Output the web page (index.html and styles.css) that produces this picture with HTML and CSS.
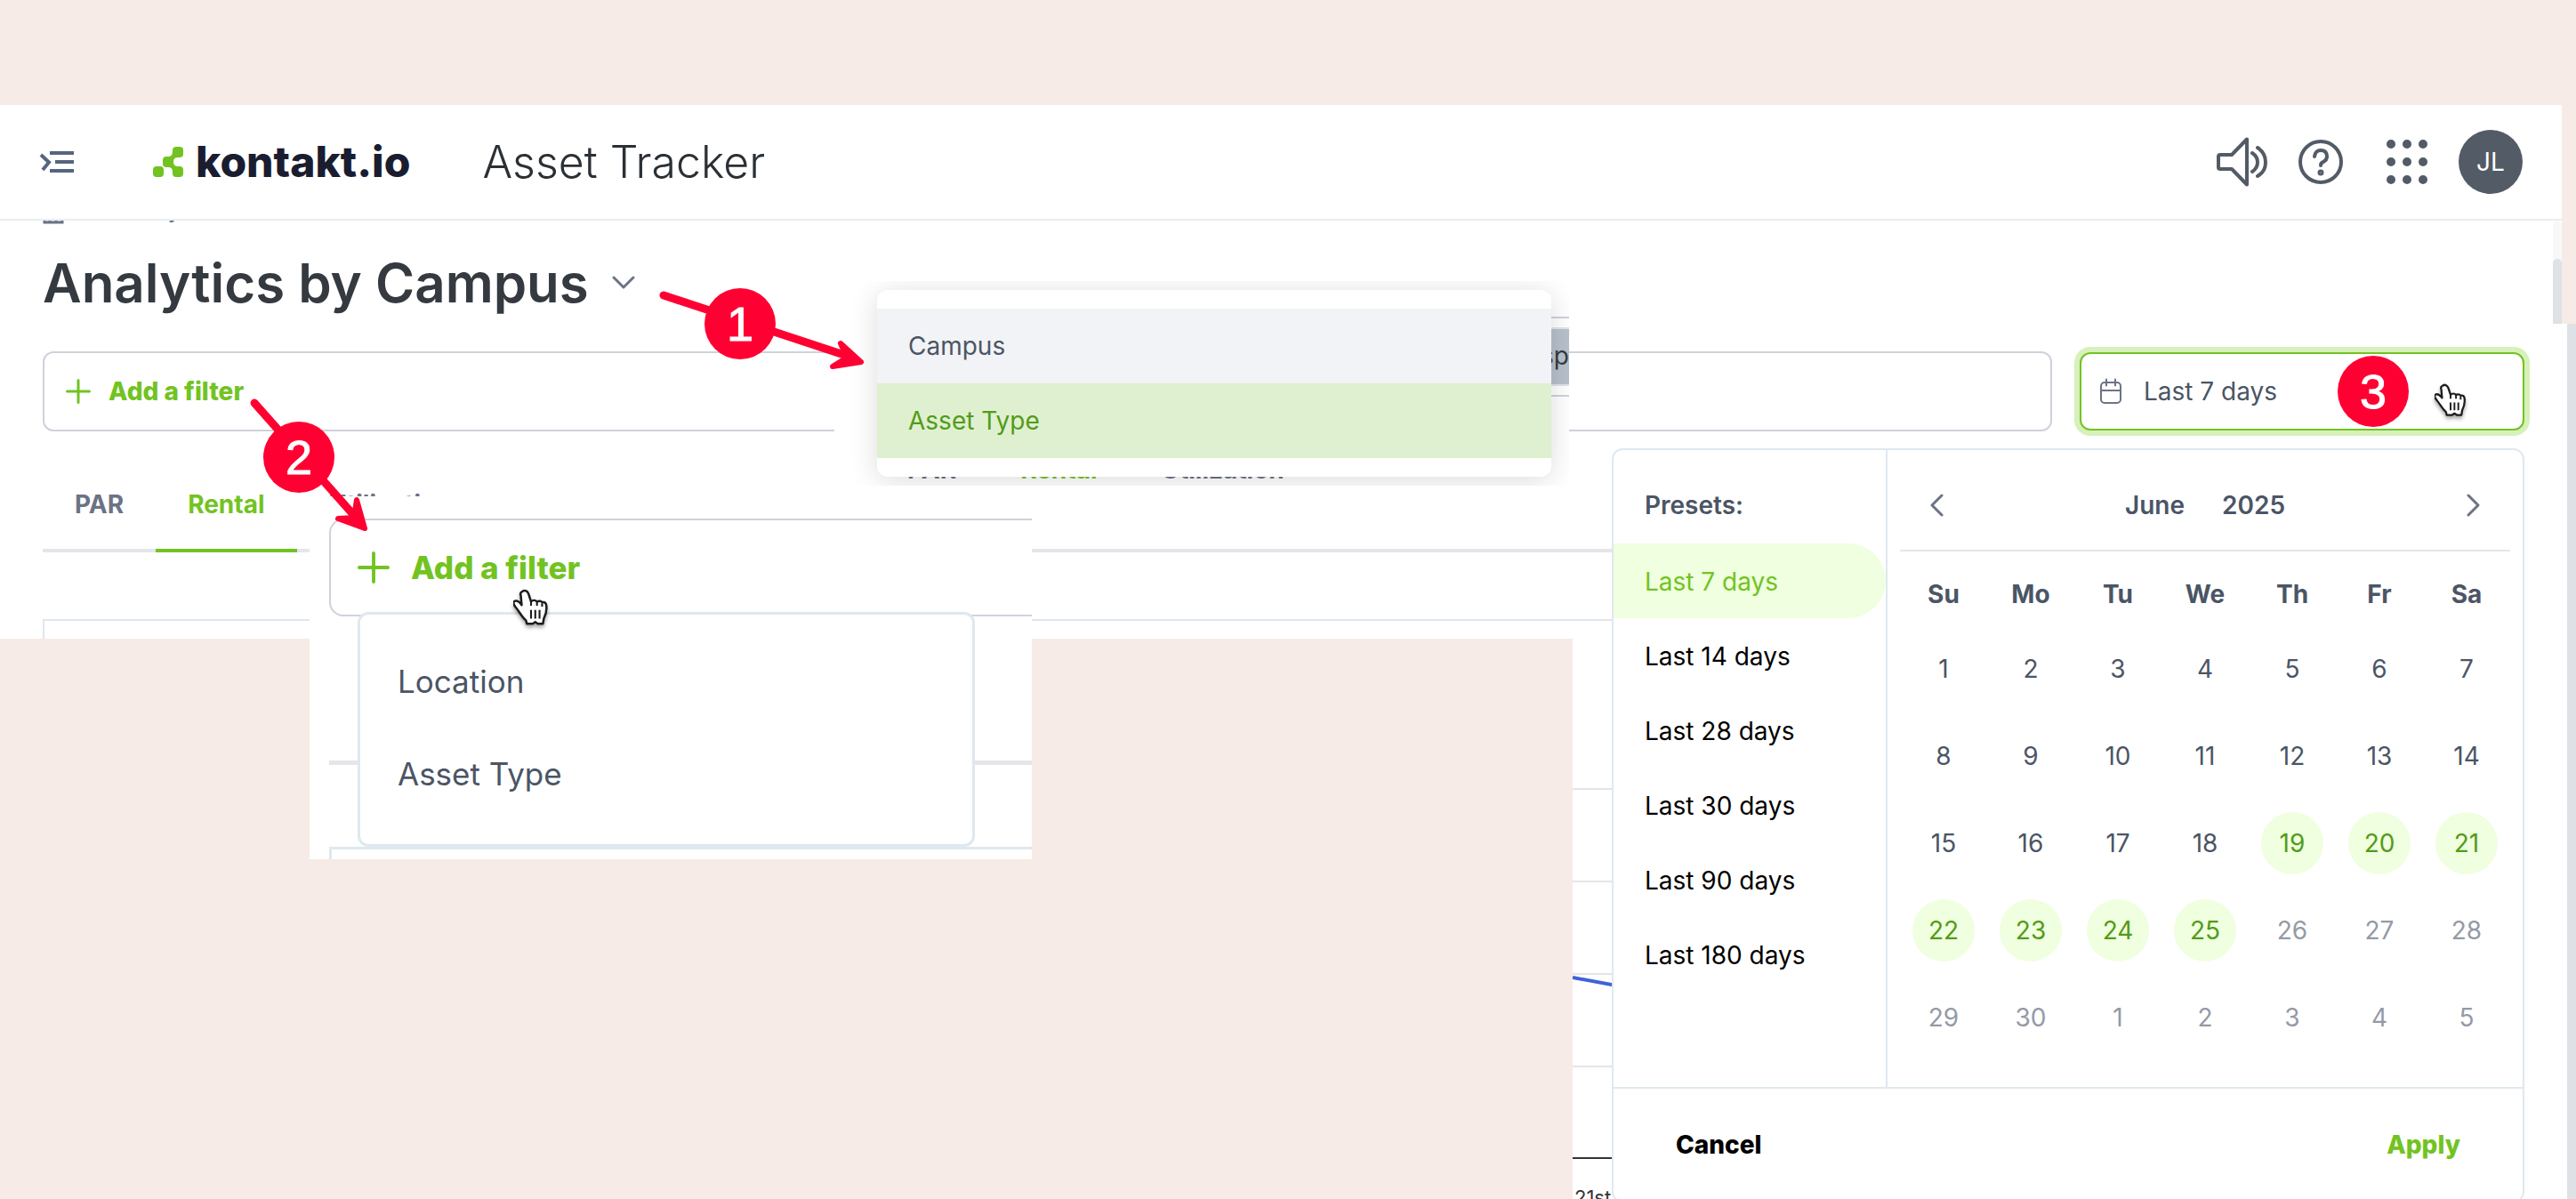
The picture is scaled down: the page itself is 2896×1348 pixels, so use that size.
FILE: index.html
```html
<!DOCTYPE html>
<html lang="en">
<head>
  <meta charset="UTF-8" />
  <meta name="viewport" content="width=device-width, initial-scale=1.0" />
  <title>Asset Tracker - Analytics by Campus</title>
  <link rel="stylesheet" href="styles.css">
</head>
<body>
  <!-- shared shapes -->
  <svg class="defs" width="0" height="0" aria-hidden="true">
    <symbol id="hand" viewBox="0 0 40 46">
      <path d="M10 4c3-2 6 0 7 3l3 9c2-2 5-2 7 0 2-1 5-1 6 1 3-1 5 1 5 4 1 7-1 11-3 15l-1 6-6 0-3-2-3 2h-7l-1-4c-5-4-7-9-11-14-3-4-5-6-3-8 3-2 6 0 9 4L8 9c-1-2 0-4 2-5z" fill="#fff" stroke="#1c1c1c" stroke-width="2.6" stroke-linejoin="round"/>
      <path d="M20 15v6M27 16v5M33 18v4M20 26v10M25 26v10M30 26v10" fill="none" stroke="#1c1c1c" stroke-width="2.2"/>
    </symbol>
    <symbol id="plus" viewBox="0 0 28 28">
      <path d="M14 1.500v25M1.500 14h25" fill="none" stroke="currentColor" stroke-width="3" stroke-linecap="round"/>
    </symbol>
  </svg>

  <header class="topbar">
    <button class="icon-btn menu-toggle" aria-label="Expand menu">
      <svg width="40" height="28" viewBox="0 0 40 28" fill="none" stroke="#56657f" stroke-width="4">
        <path d="M12 4h27M18 14h21M12 24h27"/>
        <path d="M2 6l9 8.500L4 23"/>
      </svg>
    </button>
    <a class="logo" href="#">
      <svg width="34" height="34" viewBox="0 0 34 34" fill="#72c322">
        <rect x="0" y="22" width="12" height="12" rx="4"/>
        <rect x="22" y="0" width="12" height="12" rx="4"/>
        <rect x="11" y="11" width="12" height="12" rx="4"/>
        <rect x="22" y="22" width="12" height="12" rx="4"/>
        <path d="M17 11q5 0 5-6l6 7q-5 0-5 5q0 5 5 5l-6 6q0-5-5-5z"/>
      </svg>
      <span>kontakt.io</span>
    </a>
    <span class="app-name">Asset Tracker</span>

    <div class="topbar-actions">
      <button class="icon-btn" aria-label="Announcements">
        <svg width="58" height="58" viewBox="0 0 58 58" fill="none" stroke="#525b66" stroke-width="4" stroke-linecap="round" stroke-linejoin="round">
          <path d="M5 21h13L35 3.500v51L18 37H5q-2 0-2-2V23q0-2 2-2z"/>
          <path d="M41 19q6 4 6 10.500T41 40M47 13q9 6 9 16.500T47 45"/>
        </svg>
      </button>
      <button class="icon-btn" aria-label="Help">
        <svg width="50" height="50" viewBox="0 0 50 50" fill="none" stroke="#525b66" stroke-width="4" stroke-linecap="round">
          <circle cx="25" cy="25" r="23"/>
          <path d="M18 19q1-7 7-7 7 0 7 7 0 4-4 6-3 1-3 4"/>
          <circle cx="25" cy="37" r="1.500"/>
        </svg>
      </button>
      <button class="icon-btn apps" aria-label="Apps">
        <svg width="46" height="50" viewBox="0 0 46 50" fill="#525b66">
          <circle cx="5" cy="5" r="5"/><circle cx="23" cy="5" r="5"/><circle cx="41" cy="5" r="5"/>
          <circle cx="5" cy="25" r="5"/><circle cx="23" cy="25" r="5"/><circle cx="41" cy="25" r="5"/>
          <circle cx="5" cy="45" r="5"/><circle cx="23" cy="45" r="5"/><circle cx="41" cy="45" r="5"/>
        </svg>
      </button>
      <button class="avatar">JL</button>
    </div>
  </header>

  <section class="page-head">
    <div class="head-main">
      <nav class="breadcrumb" aria-label="Breadcrumb">
        <svg width="24" height="28" viewBox="0 0 24 28" fill="none" stroke="currentColor" stroke-width="3"><path d="M2 8v18h20V8M8 26V16M15 26V16M0 10L12 2l12 8"/></svg>
        <span>/</span>
        <a href="#">Analytics</a>
        <span>/</span>
        <a href="#">Dashboards</a>
      </nav>
      <h1>
        Analytics by Campus
        <button class="icon-btn" aria-label="Change grouping">
          <svg width="26" height="16" viewBox="0 0 26 16" fill="none" stroke="#6b7385" stroke-width="3" stroke-linecap="round" stroke-linejoin="round"><path d="M2 2l11 11L24 2"/></svg>
        </button>
      </h1>
    </div>
    <div class="scroll-track"><div class="scroll-thumb"></div></div>
  </section>

  <main class="workspace">
    <div class="filters">
      <div class="filter-box">
        <button class="add-filter"><svg width="28" height="28"><use href="#plus"/></svg>Add a filter</button>
      </div>
      <div class="date-field">
        <button class="date-trigger">
          <svg width="26" height="30" viewBox="0 0 26 30" fill="none" stroke="#6b7385" stroke-width="2" stroke-linecap="round">
            <rect x="2" y="5" width="22" height="23" rx="4"/>
            <path d="M2 14h22M8 1.500v7M18 1.500v7"/>
          </svg>
          Last 7 days
        </button>

        <div class="date-panel">
          <div class="panel-body">
            <div class="presets">
              <h2>Presets:</h2>
              <button class="preset active">Last 7 days</button>
              <button class="preset">Last 14 days</button>
              <button class="preset">Last 28 days</button>
              <button class="preset">Last 30 days</button>
              <button class="preset">Last 90 days</button>
              <button class="preset">Last 180 days</button>
            </div>
            <div class="calendar">
              <div class="cal-head">
                <button class="icon-btn" aria-label="Previous month"><svg width="16" height="26" viewBox="0 0 16 26" fill="none" stroke="#6b7385" stroke-width="3" stroke-linecap="round" stroke-linejoin="round"><path d="M13 2L2 13l11 11"/></svg></button>
                <div class="cal-title"><button>June</button><button>2025</button></div>
                <button class="icon-btn" aria-label="Next month"><svg width="16" height="26" viewBox="0 0 16 26" fill="none" stroke="#6b7385" stroke-width="3" stroke-linecap="round" stroke-linejoin="round"><path d="M3 2l11 11L3 24"/></svg></button>
              </div>
              <table>
                <thead>
                  <tr><th>Su</th><th>Mo</th><th>Tu</th><th>We</th><th>Th</th><th>Fr</th><th>Sa</th></tr>
                </thead>
                <tbody>
                  <tr><td>1</td><td>2</td><td>3</td><td>4</td><td>5</td><td>6</td><td>7</td></tr>
                  <tr><td>8</td><td>9</td><td>10</td><td>11</td><td>12</td><td>13</td><td>14</td></tr>
                  <tr><td>15</td><td>16</td><td>17</td><td>18</td><td><span class="in-range">19</span></td><td><span class="in-range">20</span></td><td><span class="in-range">21</span></td></tr>
                  <tr><td><span class="in-range">22</span></td><td><span class="in-range">23</span></td><td><span class="in-range">24</span></td><td><span class="in-range">25</span></td><td class="muted">26</td><td class="muted">27</td><td class="muted">28</td></tr>
                  <tr><td class="muted">29</td><td class="muted">30</td><td class="muted">1</td><td class="muted">2</td><td class="muted">3</td><td class="muted">4</td><td class="muted">5</td></tr>
                </tbody>
              </table>
            </div>
          </div>
          <div class="panel-footer">
            <button class="cancel">Cancel</button>
            <button class="apply">Apply</button>
          </div>
        </div>
      </div>
    </div>

    <nav class="tabs">
      <a href="#">PAR</a>
      <a href="#" class="active">Rental</a>
      <a href="#">Utilization</a>
    </nav>

    <div class="card-top"></div>
    <div class="lower">
      <div class="blank"></div>
      <div class="chart">
        <svg width="60" height="630" viewBox="0 0 60 630" fill="none" stroke-width="2">
          <path d="M0 169h60M0 273h60M0 377h60M0 481h60" stroke="#e5e5e8"/>
          <path d="M0 584h60" stroke="#333"/>
          <path d="M0 381l60 11" stroke="#4062d8" stroke-width="4"/>
        </svg>
        <span class="tick">21st</span>
      </div>
    </div>
  </main>

  <!-- step 1: grouping menu -->
  <div class="inset grouping">
    <div class="grouping-back">
      <div class="chip-box"><span class="chip">sp</span></div>
      <div class="tabs-back"><span>PAR</span><span class="active">Rental</span><span>Utilization</span></div>
    </div>
    <div class="grouping-menu">
      <button class="hovered">Campus</button>
      <button class="selected">Asset Type</button>
    </div>
  </div>

  <!-- step 2: filter menu -->
  <div class="inset filtering">
    <div class="filter-box large">
      <button class="add-filter"><svg width="36" height="36"><use href="#plus"/></svg>Add a filter</button>
    </div>
    <div class="filtering-line"></div>
    <div class="filtering-card"></div>
    <div class="filter-menu">
      <button>Location</button>
      <button>Asset Type</button>
    </div>
    <svg class="cursor cursor-filter" width="40" height="44"><use href="#hand"/></svg>
  </div>
  <svg class="cursor cursor-date" width="36" height="40"><use href="#hand"/></svg>

  <!-- arrows and numbered steps -->
  <svg class="arrows" width="1000" height="640" viewBox="0 0 1000 640" stroke="#ff0032" stroke-linecap="round" stroke-linejoin="round" fill="#ff0032" aria-hidden="true">
    <path d="M746 332L952 400" stroke-width="9"/>
    <path d="M945 386L968 407L936 412L952 402z" stroke-width="6"/>
    <path d="M286 453L402 584" stroke-width="9"/>
    <path d="M401 562L410 594L380 583L398 582z" stroke-width="6"/>
  </svg>
  <div class="step step-1">1</div>
  <div class="step step-2">2</div>
  <div class="step step-3">3</div>
</body>
</html>
```
FILE: styles.css
```css
* {
  box-sizing: border-box;
}

body {
  margin: 0;
  padding-top: 118px;
  height: 100vh;
  overflow: hidden;
  position: relative;
  display: flex;
  flex-direction: column;
  background: #f6ebe6;
  color: #4b5565;
  font-family: Inter, "Open Sans", sans-serif;
  font-size: 28px;
  line-height: 36px;
}

button {
  font: inherit;
  color: inherit;
  background: none;
  border: 0;
  padding: 0;
  text-align: left;
}

a {
  color: inherit;
  text-decoration: none;
}

svg {
  display: block;
}

.defs {
  position: absolute;
}

.icon-btn {
  display: flex;
}

/* top bar */
.topbar {
  display: flex;
  align-items: center;
  flex: none;
  height: 130px;
  margin-right: 16px;
  padding: 0 44px;
  background: #fff;
  border-bottom: 2px solid #e9eef3;
}

.logo {
  display: flex;
  align-items: center;
  gap: 14px;
  margin-left: 88px;
  color: #1a1d30;
  font-size: 48px;
  font-weight: 800;
}

.app-name {
  margin-left: 81px;
  color: #2b3035;
  font-size: 50px;
  font-weight: 300;
}

.topbar-actions {
  display: flex;
  align-items: center;
  gap: 35px;
  margin-left: auto;
}

.apps {
  margin-left: 14px;
}

.avatar {
  width: 72px;
  height: 72px;
  border-radius: 50%;
  background: #525b66;
  color: #fff;
  text-align: center;
}

/* page title */
.page-head {
  display: flex;
  flex: none;
  height: 116px;
  margin-right: 16px;
  background: #fff;
  overflow: hidden;
}

.head-main {
  flex: 1;
  padding-left: 48px;
}

/* scrolled almost fully under the top bar */
.breadcrumb {
  display: flex;
  align-items: flex-end;
  gap: 24px;
  height: 36px;
  margin-top: -32px;
  color: #6b7385;
}

h1 {
  display: flex;
  align-items: center;
  gap: 26px;
  margin: 30px 0 0;
  color: #343a40;
  font-size: 60px;
  line-height: 72px;
  font-weight: 600;
}

.scroll-track {
  width: 10px;
  padding-top: 43px;
  border-radius: 5px 5px 0 0;
  background: #f8f8f8;
}

.scroll-thumb {
  height: 100%;
  border-radius: 5px 5px 0 0;
  background: #dee2e6;
}

/* main area */
.workspace {
  flex: 1;
  display: flex;
  flex-direction: column;
  min-height: 0;
  background: #fff;
  border-right: 10px solid #dee2e6;
}

.filters {
  display: flex;
  align-items: center;
  gap: 31px;
  margin: 31px 48px 0;
}

.filter-box {
  flex: 1;
  display: flex;
  align-items: center;
  height: 90px;
  padding: 0 24px;
  border: 2px solid #ced2da;
  border-radius: 12px;
  background: #fff;
}

.add-filter {
  display: flex;
  align-items: center;
  gap: 20px;
  color: #72c322;
  font-weight: 800;
}

.date-field {
  position: relative;
  width: 500px;
}

.date-trigger {
  display: flex;
  align-items: center;
  gap: 24px;
  width: 100%;
  height: 88px;
  padding: 0 20px;
  border: 2px solid #72c322;
  border-radius: 12px;
  background: #fff;
  box-shadow: 0 0 0 6px #d6f1ba;
}

.date-panel {
  position: absolute;
  z-index: 1;
  top: 108px;
  right: 0;
  width: 1026px;
  border: 2px solid #dfe8ef;
  border-radius: 12px;
  background: #fff;
}

.panel-body {
  display: flex;
  height: 718px;
  border-bottom: 2px solid #dfe8ef;
}

.presets {
  display: flex;
  flex-direction: column;
  width: 308px;
  border-right: 2px solid #dfe8ef;
}

.presets h2 {
  margin: 0;
  padding: 44px 35px 25px;
  font-size: 28px;
  font-weight: 600;
}

.preset {
  height: 84px;
  padding: 2px 35px 0;
  color: #000;
}

.preset.active {
  background: #efffdf;
  border-radius: 0 42px 42px 0;
  color: #72c322;
}

.calendar {
  flex: 1;
  padding: 0 14px;
}

.cal-head {
  display: flex;
  align-items: center;
  justify-content: space-between;
  height: 114px;
  padding: 12px 34px 0;
  border-bottom: 2px solid #e5e5ea;
}

.cal-title {
  display: flex;
  gap: 42px;
  font-weight: 600;
}

table {
  width: 100%;
  table-layout: fixed;
  border-collapse: collapse;
}

th {
  height: 83px;
  padding: 12px 0 0;
  font-weight: 700;
}

td {
  height: 98px;
  padding: 0;
  text-align: center;
}

.in-range {
  display: block;
  width: 70px;
  margin: 0 auto;
  border-radius: 50%;
  background: #efffdf;
  color: #539b18;
  line-height: 70px;
}

.muted {
  color: #949aa6;
}

.panel-footer {
  display: flex;
  align-items: center;
  justify-content: space-between;
  height: 126px;
  padding: 0 70px;
  font-weight: 800;
}

.cancel {
  color: #000;
}

.apply {
  color: #72c322;
}

.tabs {
  display: flex;
  margin: 52px 48px 0;
  border-bottom: 4px solid #e5e5ea;
  color: #6b7385;
  font-weight: 700;
}

.tabs a {
  height: 84px;
  margin-bottom: -4px;
  padding: 12px 36px 0;
  border-bottom: 4px solid transparent;
}

.tabs a.active {
  border-color: #72c322;
  color: #72c322;
}

.card-top {
  height: 22px;
  margin: 75px 48px 0;
  border: 2px solid #dfe6ee;
  border-bottom: 0;
}

.lower {
  flex: 1;
  display: flex;
  min-height: 0;
  overflow: hidden;
}

.blank {
  flex: 1;
  background: #f6ebe6;
}

.chart {
  position: relative;
  width: 1118px;
}

.tick {
  position: absolute;
  left: 2px;
  top: 610px;
  color: #333;
  font-size: 22px;
}

/* insets over the page */
.inset {
  position: absolute;
  overflow: hidden;
  background: #fff;
}

.grouping {
  left: 938px;
  top: 316px;
  width: 826px;
  height: 230px;
  padding: 10px 20px 10px 48px;
}

.grouping-back {
  position: absolute;
  inset: 40px 0 0 72px;
}

.chip-box {
  display: flex;
  align-items: center;
  justify-content: flex-end;
  height: 90px;
  border-top: 2px solid #ced2da;
  border-bottom: 2px solid #ced2da;
}

.chip {
  padding: 12px 0 14px 20px;
  border-top: 2px solid #dfe6ee;
  border-bottom: 2px solid #dfe6ee;
  background: #b8c0cb;
  color: #343a40;
}

.tabs-back {
  display: flex;
  gap: 72px;
  padding: 64px 10px 0;
  color: #6b7385;
  font-weight: 700;
}

.tabs-back .active {
  color: #72c322;
}

.grouping-menu {
  position: relative;
  padding: 21px 0;
  border-radius: 12px;
  background: #fff;
  box-shadow: 0 4px 32px rgba(0, 0, 0, 0.14);
}

.grouping-menu button {
  display: block;
  width: 100%;
  height: 84px;
  padding: 0 35px;
}

.grouping-menu .hovered {
  background: #f2f3f6;
}

.grouping-menu .selected {
  background: #dff0d0;
  color: #539b18;
}

.filtering {
  left: 348px;
  top: 558px;
  width: 812px;
  height: 408px;
  padding: 25px 0 0 22px;
}

.filter-box.large {
  height: 110px;
  padding: 0 30px;
  border-right: 0;
  border-radius: 16px 0 0 16px;
}

.large .add-filter {
  gap: 24px;
  font-size: 35px;
}

.filtering-line {
  height: 5px;
  margin-top: 162px;
  background: #e5e5ea;
}

.filtering-card {
  height: 20px;
  margin-top: 92px;
  border: 3px solid #dfe8ef;
  border-right: 0;
  border-bottom: 0;
}

.filter-menu {
  position: absolute;
  left: 54px;
  top: 130px;
  width: 694px;
  height: 264px;
  padding: 23px 42px;
  border: 3px solid #dfe8ef;
  border-radius: 12px;
  background: #fff;
  font-size: 35px;
}

.filter-menu button {
  display: block;
  height: 104px;
}

.cursor {
  position: absolute;
  filter: drop-shadow(0 3px 2px rgba(0, 0, 0, 0.35));
}

.cursor-filter {
  left: 229px;
  top: 103px;
}

.cursor-date {
  left: 2737px;
  top: 430px;
}

.arrows {
  position: absolute;
  left: 0;
  top: 0;
}

.step {
  position: absolute;
  width: 80px;
  height: 80px;
  border-radius: 50%;
  background: #ff0032;
  color: #fff;
  font-family: "Liberation Sans", Arial, sans-serif;
  font-size: 54px;
  line-height: 80px;
  text-align: center;
  -webkit-text-stroke: 1px #fff;
}

.step-1 {
  left: 792px;
  top: 324px;
}

.step-2 {
  left: 296px;
  top: 474px;
}

.step-3 {
  left: 2628px;
  top: 400px;
}
```
